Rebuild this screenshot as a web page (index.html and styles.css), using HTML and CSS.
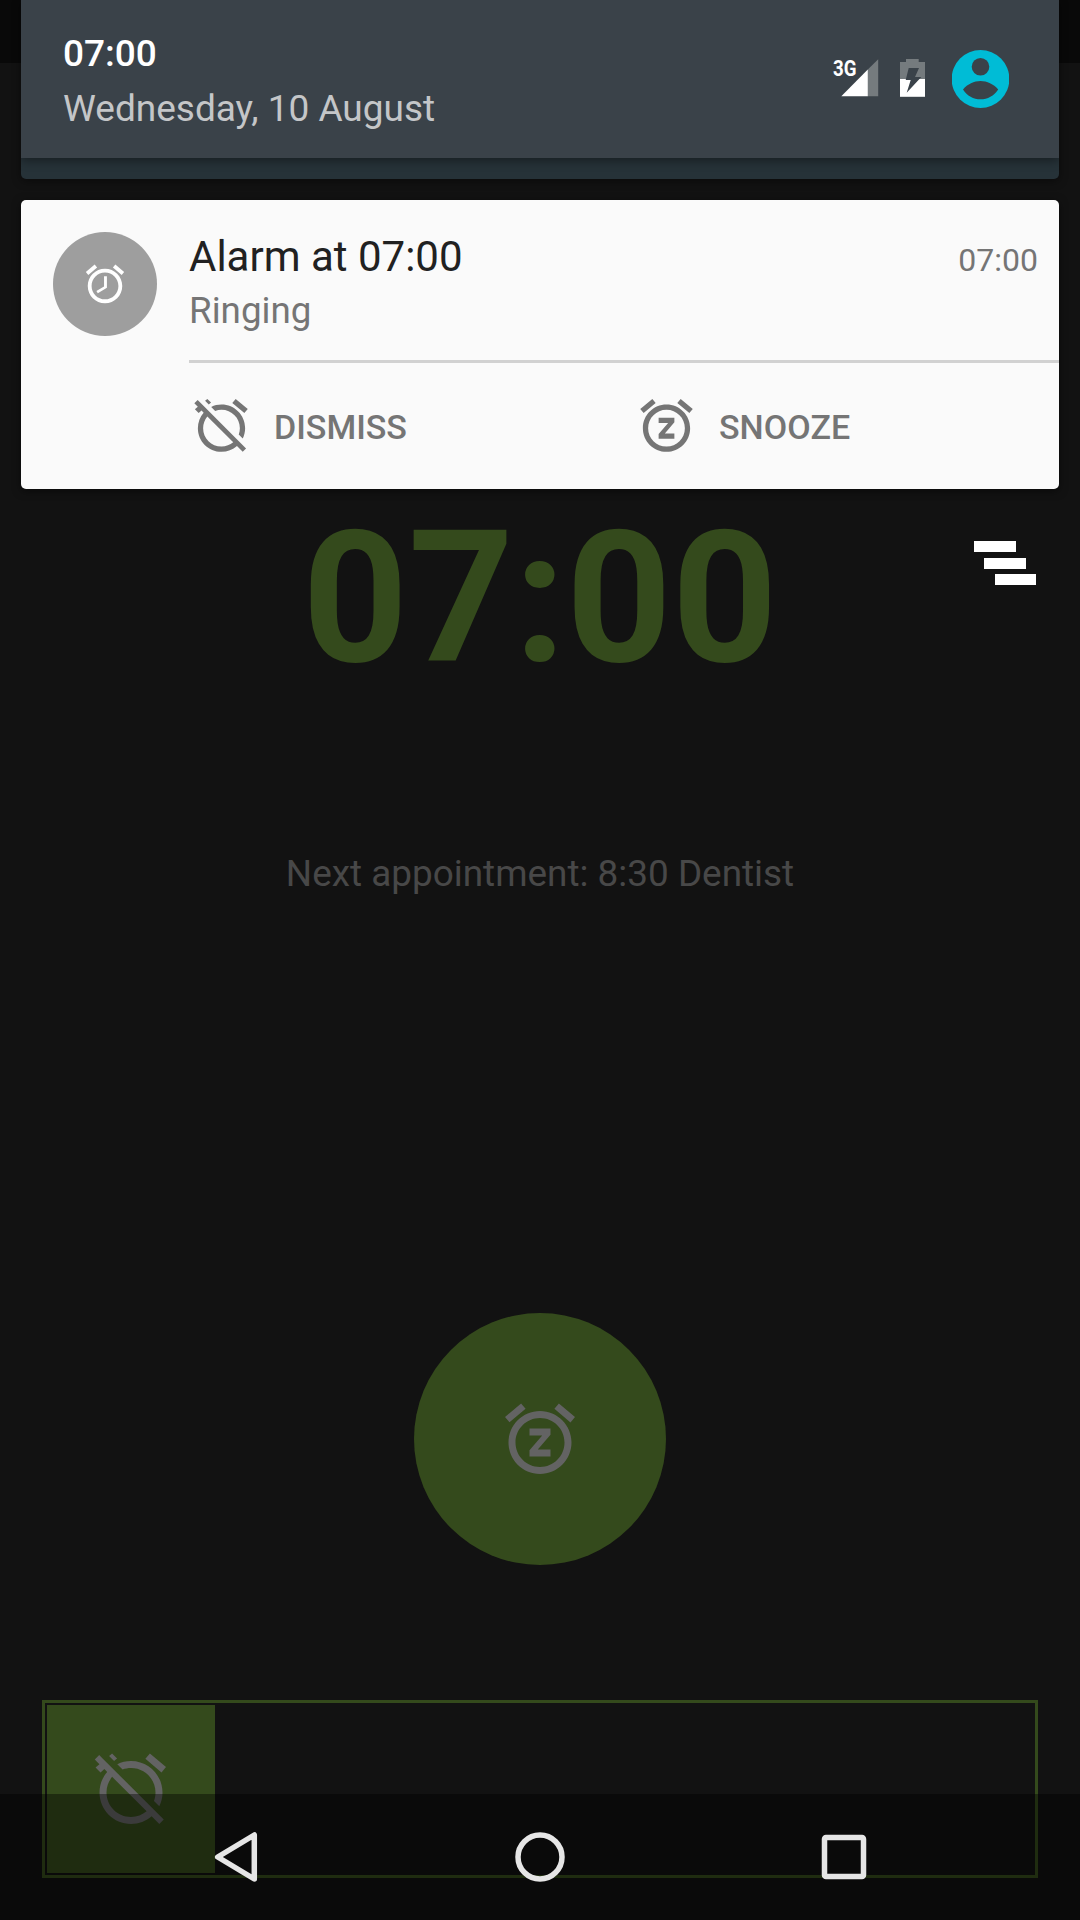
FILE: index.html
```html
<!DOCTYPE html>
<html lang="en">
<head>
<meta charset="utf-8">
<title>Alarm</title>
<link rel="stylesheet" href="styles.css">
</head>
<body>
<div class="screen">
  <main class="alarm">
    <div class="clock">07:00</div>
    <div class="appointment">Next appointment: 8:30 Dentist</div>
    <button class="snooze-button" aria-label="Snooze">
      <svg class="big-icon" viewBox="0 0 24 24"><path d="M7.88 3.39L6.6 1.86 2 5.71l1.29 1.53 4.59-3.85zM22 5.72l-4.6-3.86-1.29 1.53 4.6 3.86L22 5.72zM12 4c-4.97 0-9 4.03-9 9s4.02 9 9 9c4.97 0 9-4.03 9-9s-4.03-9-9-9zm0 16c-3.87 0-7-3.13-7-7s3.13-7 7-7 7 3.13 7 7-3.13 7-7 7zm-3-9h3.63L9 15.2V17h6v-2h-3.63L15 10.8V9H9v2z"/></svg>
    </button>
    <div class="slider">
      <div class="slider-handle">
        <svg class="big-icon" viewBox="0 0 24 24"><path d="M12 6c3.87 0 7 3.13 7 7 0 .84-.16 1.65-.43 2.4l1.52 1.52c.58-1.19.91-2.51.91-3.92 0-4.97-4.03-9-9-9-1.41 0-2.73.33-3.92.91L9.6 6.43C10.35 6.16 11.16 6 12 6zm10-.28l-4.6-3.86-1.29 1.53 4.6 3.86L22 5.72zM2.92 2.29L1.65 3.57 2.98 4.9l-1.11.93 1.42 1.42 1.11-.94.8.8C3.83 8.69 3 10.75 3 13c0 4.97 4.02 9 9 9 2.25 0 4.31-.83 5.89-2.2l2.2 2.2 1.27-1.27L3.89 3.27l-.97-.98zm13.55 16.1C15.26 19.39 13.7 20 12 20c-3.87 0-7-3.13-7-7 0-1.7.61-3.26 1.61-4.47l9.86 9.86zM8.02 3.28L6.6 1.86l-.86.71 1.42 1.42.86-.71z"/></svg>
      </div>
    </div>
  </main>

  <div class="status-scrim"></div>

  <section class="shade">
    <div class="quick-panel">
      <header class="header">
        <div class="header-text">
          <div class="header-time">07:00</div>
          <div class="header-date">Wednesday, 10 August</div>
        </div>
        <div class="header-icons">
          <svg class="signal" viewBox="0 0 46 38">
            <text class="network" x="0" y="17" textLength="23.500" lengthAdjust="spacingAndGlyphs">3G</text>
            <path class="dim" d="M34.800 10.500L45.200 0.300V37.300H34.800z"/>
            <path class="lit" d="M8.300 37.300L34.800 10.500V37.300z"/>
          </svg>
          <svg class="battery" viewBox="0 0 25 38">
            <path class="dim" d="M0 3H6V0H18.700V3H25V20H0z"/>
            <path class="lit" d="M0 20H25V37.800H0z"/>
            <path class="bolt" d="M8.700 9H19L15 18H21.300L6.700 33.700L10.700 21H5.700z"/>
          </svg>
          <svg class="avatar" viewBox="0 0 57 58">
            <circle class="avatar-disc" cx="28.500" cy="29" r="28.900"/>
            <circle class="avatar-cut" cx="28.500" cy="16.700" r="8.800"/>
            <path class="avatar-cut" d="M11 39.500C15.500 34 22 31 28.500 31S41.500 34 46.200 39.500C42 46 35.500 49.300 28.500 49.300S15 46 11 39.500z"/>
          </svg>
        </div>
      </header>
    </div>

    <article class="notification">
      <div class="badge">
        <svg class="badge-icon" viewBox="0 0 24 24"><path transform="matrix(-1 0 0 1 24 0)" d="M22 5.720l-4.600-3.860-1.290 1.530 4.600 3.860L22 5.720zM7.880 3.390L6.600 1.860 2 5.710l1.290 1.530 4.590-3.850zM12.500 8H11v6l4.750 2.850.75-1.230-4-2.370V8zM12 4c-4.970 0-9 4.030-9 9s4.020 9 9 9c4.970 0 9-4.030 9-9s-4.030-9-9-9zm0 16c-3.870 0-7-3.130-7-7s3.130-7 7-7 7 3.130 7 7-3.130 7-7 7z"/></svg>
      </div>
      <div class="notification-body">
        <div class="notification-head">
          <span class="title">Alarm at 07:00</span>
          <span class="when">07:00</span>
        </div>
        <div class="subtitle">Ringing</div>
        <div class="actions">
          <div class="action">
            <svg class="action-icon" viewBox="0 0 24 24"><path d="M12 6c3.87 0 7 3.13 7 7 0 .84-.16 1.65-.43 2.4l1.52 1.52c.58-1.19.91-2.51.91-3.92 0-4.97-4.03-9-9-9-1.41 0-2.73.33-3.92.91L9.6 6.43C10.35 6.16 11.16 6 12 6zm10-.28l-4.6-3.86-1.29 1.53 4.6 3.86L22 5.72zM2.92 2.29L1.65 3.57 2.98 4.9l-1.11.93 1.42 1.42 1.11-.94.8.8C3.83 8.69 3 10.75 3 13c0 4.97 4.02 9 9 9 2.25 0 4.31-.83 5.89-2.2l2.2 2.2 1.27-1.27L3.89 3.27l-.97-.98zm13.55 16.1C15.26 19.39 13.7 20 12 20c-3.87 0-7-3.13-7-7 0-1.7.61-3.26 1.61-4.47l9.86 9.86zM8.02 3.28L6.6 1.86l-.86.71 1.42 1.42.86-.71z"/></svg>
            <span class="action-label">DISMISS</span>
          </div>
          <div class="action">
            <svg class="action-icon" viewBox="0 0 24 24"><path d="M7.88 3.39L6.6 1.86 2 5.71l1.29 1.53 4.59-3.85zM22 5.72l-4.6-3.86-1.29 1.53 4.6 3.86L22 5.72zM12 4c-4.97 0-9 4.03-9 9s4.02 9 9 9c4.97 0 9-4.03 9-9s-4.03-9-9-9zm0 16c-3.87 0-7-3.13-7-7s3.13-7 7-7 7 3.13 7 7-3.13 7-7 7zm-3-9h3.63L9 15.2V17h6v-2h-3.63L15 10.8V9H9v2z"/></svg>
            <span class="action-label">SNOOZE</span>
          </div>
        </div>
      </div>
    </article>

    <div class="clear-all">
      <span class="clear-bar"></span>
      <span class="clear-bar"></span>
      <span class="clear-bar"></span>
    </div>
  </section>

  <nav class="nav-bar">
    <svg class="nav-icon" viewBox="0 0 64 64"><path d="M50.300 10V54L13.700 32z"/></svg>
    <svg class="nav-icon" viewBox="0 0 64 64"><circle cx="32" cy="32" r="22"/></svg>
    <svg class="nav-icon" viewBox="0 0 64 64"><rect x="12.500" y="12.500" width="39" height="39" rx="1.500"/></svg>
  </nav>
</div>
</body>
</html>
```

FILE: styles.css
```css
* {
  box-sizing: border-box;
}

body {
  margin: 0;
  background: #121212;
  font-family: Roboto, sans-serif;
}

svg {
  display: block;
  flex: none;
}

.screen {
  position: relative;
  width: 1080px;
  height: 1920px;
  overflow: hidden;
  background: #121212;
}

/* Alarm screen, dimmed behind the shade */
.alarm {
  display: flex;
  flex-direction: column;
  align-items: center;
  height: 100%;
  padding: 506px 42px 42px;
}

.clock {
  color: #344a1c;
  font-size: 184.5px;
  font-weight: 700;
  font-kerning: none;
  line-height: 184px;
}

.appointment {
  margin-top: 162px;
  color: #484848;
  font-size: 36.9px;
  line-height: 44px;
}

.snooze-button {
  display: flex;
  align-items: center;
  justify-content: center;
  width: 252px;
  height: 252px;
  margin-top: 417px;
  padding: 0;
  border: 0;
  border-radius: 50%;
  background: #344a1c;
}

.big-icon {
  width: 84px;
  height: 84px;
  fill: #636363;
}

.slider {
  width: 996px;
  height: 178px;
  margin-top: auto;
  padding: 2px;
  border: 3px solid #344a1c;
}

.slider-handle {
  display: flex;
  align-items: center;
  justify-content: center;
  width: 168px;
  height: 168px;
  background: #344a1c;
}

/* Notification shade */
.status-scrim {
  position: absolute;
  top: 0;
  left: 0;
  width: 100%;
  height: 63px;
  background: rgba(0, 0, 0, 0.45);
}

.shade {
  position: absolute;
  top: 0;
  left: 0;
  width: 100%;
  display: flex;
  flex-direction: column;
  padding: 0 21px;
}

.quick-panel {
  height: 179px;
  border-radius: 0 0 5px 5px;
  background: #263238;
  box-shadow: 0 2px 10px rgba(0, 0, 0, 0.45);
  overflow: hidden;
}

.header {
  display: flex;
  justify-content: space-between;
  height: 158px;
  padding: 26px 50px 0 42px;
  background: #3a4249;
  box-shadow: 0 2px 10px rgba(0, 0, 0, 0.45);
}

.header-time,
.header-date {
  font-size: 37px;
  line-height: 55px;
  white-space: nowrap;
}

.header-time {
  color: #fff;
  font-weight: 500;
}

.header-date {
  color: #c4c6c8;
}

.header-icons {
  display: flex;
  align-items: flex-start;
  padding-top: 33px;
}

.signal {
  width: 46px;
  height: 38px;
  margin-right: 21px;
  overflow: visible;
}

.network {
  fill: #fff;
  font-size: 22.5px;
  font-weight: 700;
}

.battery {
  width: 25px;
  height: 38px;
  margin-right: 27px;
}

.avatar {
  width: 57px;
  height: 58px;
  margin-top: -9px;
}

.dim {
  fill: #757b7e;
}

.lit {
  fill: #fff;
}

.bolt,
.avatar-cut {
  fill: #3a4249;
}

.avatar-disc {
  fill: #00bcd6;
}

.notification {
  display: flex;
  height: 289px;
  margin-top: 21px;
  padding-left: 32px;
  border-radius: 5px;
  background: #fafafa;
  box-shadow: 0 2px 8px rgba(0, 0, 0, 0.5);
}

.badge {
  display: flex;
  align-items: center;
  justify-content: center;
  width: 104px;
  height: 104px;
  margin: 32px 32px 0 0;
  border-radius: 50%;
  background: #9e9e9e;
}

.badge-icon {
  width: 46px;
  height: 46px;
  margin-bottom: 1px;
  fill: #fff;
}

.notification-body {
  flex: 1;
  padding-top: 32px;
}

.notification-head {
  display: flex;
  align-items: baseline;
  justify-content: space-between;
  height: 50px;
  padding-right: 21px;
}

.title {
  color: #212121;
  font-size: 42px;
  line-height: 50px;
}

.when {
  color: #757575;
  font-size: 32px;
  line-height: 38px;
}

.subtitle {
  margin-top: 7px;
  color: #757575;
  font-size: 36.75px;
  line-height: 44px;
}

.actions {
  display: flex;
  gap: 20px;
  height: 129px;
  margin-top: 27px;
  border-top: 3px solid #d1d1d1;
}

.action {
  display: flex;
  flex: 1;
  align-items: center;
  gap: 21px;
  padding-left: 1px;
}

.action-icon {
  width: 63px;
  height: 63px;
  margin-bottom: 1px;
  fill: #757575;
}

.action-label {
  padding-top: 2px;
  color: #757575;
  font-size: 34px;
  font-weight: 500;
  font-kerning: none;
}

.clear-all {
  display: flex;
  flex-direction: column;
  align-self: flex-end;
  gap: 5.5px;
  width: 62px;
  margin: 52px 23px 0 0;
}

.clear-bar {
  width: 41.5px;
  height: 11px;
  background: #fff;
}

.clear-bar:nth-child(2) {
  align-self: center;
}

.clear-bar:nth-child(3) {
  align-self: flex-end;
}

/* System navigation */
.nav-bar {
  position: absolute;
  bottom: 0;
  left: 0;
  display: flex;
  align-items: center;
  justify-content: center;
  gap: 240px;
  width: 100%;
  height: 126px;
  background: rgba(0, 0, 0, 0.4);
}

.nav-icon {
  width: 64px;
  height: 64px;
  fill: none;
  stroke: #e6e6e6;
  stroke-width: 5.5;
  stroke-linejoin: round;
}
```
